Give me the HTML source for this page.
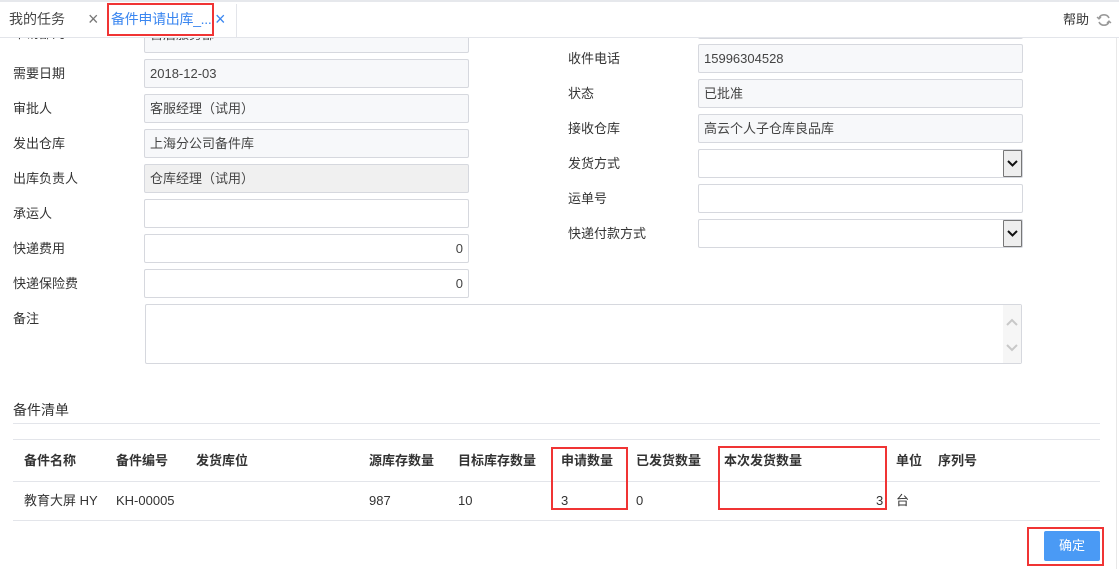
<!DOCTYPE html>
<html><head><meta charset="utf-8"><style>
*{box-sizing:border-box;margin:0;padding:0}
body{width:1119px;height:569px;overflow:hidden;background:#fff;font-family:"Liberation Sans","Noto Sans CJK SC",sans-serif;font-size:13px;color:#333;position:relative}
.a{position:absolute;white-space:nowrap}
.l{position:absolute;white-space:nowrap;height:29px;line-height:29px}
.t{position:absolute;white-space:nowrap;height:20px;line-height:20px}
.in{position:absolute;height:29px;border:1px solid #d6d8de;border-radius:2px;background:#f7f8fa;padding-left:5px;line-height:27px;font-size:13px;color:#444}
.w{background:#fff}
.r{text-align:right;padding-right:5px}
.sel{position:absolute;right:0;top:0;width:19px;height:27px;border:1px solid #777;background:#eee;border-radius:1px}
.rb{position:absolute;border:2px solid #f03434}
.th{font-weight:bold;color:#333}
</style></head><body>
<div class="a" style="left:0;top:0;width:1119px;height:2px;background:#e6e8ec"></div>
<div class="a" style="left:0;top:37px;width:1119px;height:1px;background:#e3e5ea"></div>
<div class="a" style="left:236px;top:4px;width:1px;height:33px;background:#e3e5ea"></div>
<div class="a" style="left:1116px;top:38px;width:1px;height:531px;background:#e8e8e8"></div>
<div class="t" style="left:9px;top:9px;font-size:14px;color:#444">我的任务</div>
<div class="t" style="left:88px;top:8px;font-size:18px;color:#777;line-height:22px">×</div>
<div class="t" style="left:111px;top:9px;font-size:14px;color:#3a86f0;letter-spacing:-0.3px">备件申请出库_...</div>
<div class="t" style="left:215px;top:8px;font-size:18px;color:#3a86f0;line-height:22px">×</div>
<div class="rb" style="left:107px;top:3px;width:107px;height:33px"></div>
<div class="t" style="left:1063px;top:10px;font-size:13px;color:#333">帮助</div>
<svg class="a" style="left:1096px;top:12px" width="16" height="16" viewBox="0 0 16 16"><path d="M13 6A5.5 5.5 0 0 0 3 6M3 10a5.5 5.5 0 0 0 10 0" fill="none" stroke="#999" stroke-width="1.6"/><path d="M1 5l2 2 2-2M11 11l2-2 2 2" fill="none" stroke="#999" stroke-width="1.3"/></svg>

<div class="in" style="left:144px;top:24px;width:325px;height:29px;line-height:20px;clip-path:inset(14px 0 0 0)">售后服务部</div>
<div class="l" style="left:13px;top:24px;line-height:20px;clip-path:inset(14px 0 0 0)">申请部门</div>
<div class="in w" style="left:698px;top:10px;width:325px;height:29px;clip-path:inset(28px 0 0 0)"></div>

<div class="l" style="left:13px;top:59px">需要日期</div><div class="in" style="left:144px;top:59px;width:325px">2018-12-03</div>
<div class="l" style="left:13px;top:94px">审批人</div><div class="in" style="left:144px;top:94px;width:325px">客服经理（试用）</div>
<div class="l" style="left:13px;top:129px">发出仓库</div><div class="in" style="left:144px;top:129px;width:325px">上海分公司备件库</div>
<div class="l" style="left:13px;top:164px">出库负责人</div><div class="in" style="left:144px;top:164px;width:325px;background:#f0f0f0">仓库经理（试用）</div>
<div class="l" style="left:13px;top:199px">承运人</div><div class="in w" style="left:144px;top:199px;width:325px"></div>
<div class="l" style="left:13px;top:234px">快递费用</div><div class="in w r" style="left:144px;top:234px;width:325px">0</div>
<div class="l" style="left:13px;top:269px">快递保险费</div><div class="in w r" style="left:144px;top:269px;width:325px">0</div>
<div class="l" style="left:13px;top:304px">备注</div>
<div class="in w" style="left:145px;top:304px;width:877px;height:60px"><div style="position:absolute;right:0;top:0;width:18px;height:58px;background:#f6f6f6"></div>
<svg style="position:absolute;right:2px;top:10px" width="14" height="40" viewBox="0 0 14 40"><path d="M2 10l5-5 5 5M2 30l5 5 5-5" fill="none" stroke="#c8c8c8" stroke-width="2"/></svg></div>

<div class="l" style="left:568px;top:44px">收件电话</div><div class="in" style="left:698px;top:44px;width:325px">15996304528</div>
<div class="l" style="left:568px;top:79px">状态</div><div class="in" style="left:698px;top:79px;width:325px">已批准</div>
<div class="l" style="left:568px;top:114px">接收仓库</div><div class="in" style="left:698px;top:114px;width:325px">高云个人子仓库良品库</div>
<div class="l" style="left:568px;top:149px">发货方式</div><div class="in w" style="left:698px;top:149px;width:325px"><div class="sel"><svg width="17" height="25" viewBox="0 0 17 25"><path d="M4 10l4.5 4.5L13 10" fill="none" stroke="#111" stroke-width="2"/></svg></div></div>
<div class="l" style="left:568px;top:184px">运单号</div><div class="in w" style="left:698px;top:184px;width:325px"></div>
<div class="l" style="left:568px;top:219px">快递付款方式</div><div class="in w" style="left:698px;top:219px;width:325px"><div class="sel"><svg width="17" height="25" viewBox="0 0 17 25"><path d="M4 10l4.5 4.5L13 10" fill="none" stroke="#111" stroke-width="2"/></svg></div></div>

<div class="t" style="left:13px;top:400px;font-size:14px">备件清单</div>
<div class="a" style="left:13px;top:423px;width:1087px;height:1px;background:#e3e5ea"></div>
<div class="a" style="left:13px;top:439px;width:1087px;height:1px;background:#e3e5ea"></div>
<div class="a" style="left:13px;top:481px;width:1087px;height:1px;background:#e3e5ea"></div>
<div class="a" style="left:13px;top:520px;width:1087px;height:1px;background:#e3e5ea"></div>
<div class="t th" style="left:24px;top:451px">备件名称</div>
<div class="t th" style="left:116px;top:451px">备件编号</div>
<div class="t th" style="left:196px;top:451px">发货库位</div>
<div class="t th" style="left:369px;top:451px">源库存数量</div>
<div class="t th" style="left:458px;top:451px">目标库存数量</div>
<div class="t th" style="left:561px;top:451px">申请数量</div>
<div class="t th" style="left:636px;top:451px">已发货数量</div>
<div class="t th" style="left:724px;top:451px">本次发货数量</div>
<div class="t th" style="left:896px;top:451px">单位</div>
<div class="t th" style="left:938px;top:451px">序列号</div>
<div class="t" style="left:24px;top:491px">教育大屏 HY</div>
<div class="t" style="left:116px;top:491px">KH-00005</div>
<div class="t" style="left:369px;top:491px">987</div>
<div class="t" style="left:458px;top:491px">10</div>
<div class="t" style="left:561px;top:491px">3</div>
<div class="t" style="left:636px;top:491px">0</div>
<div class="t" style="left:876px;top:491px">3</div>
<div class="t" style="left:896px;top:491px">台</div>
<div class="rb" style="left:551px;top:447px;width:77px;height:63px"></div>
<div class="rb" style="left:718px;top:446px;width:169px;height:64px"></div>
<div class="a" style="left:1044px;top:531px;width:56px;height:30px;background:#4a9af5;border-radius:2px;color:#fff;text-align:center;line-height:30px">确定</div>
<div class="rb" style="left:1027px;top:527px;width:77px;height:39px"></div>
</body></html>
